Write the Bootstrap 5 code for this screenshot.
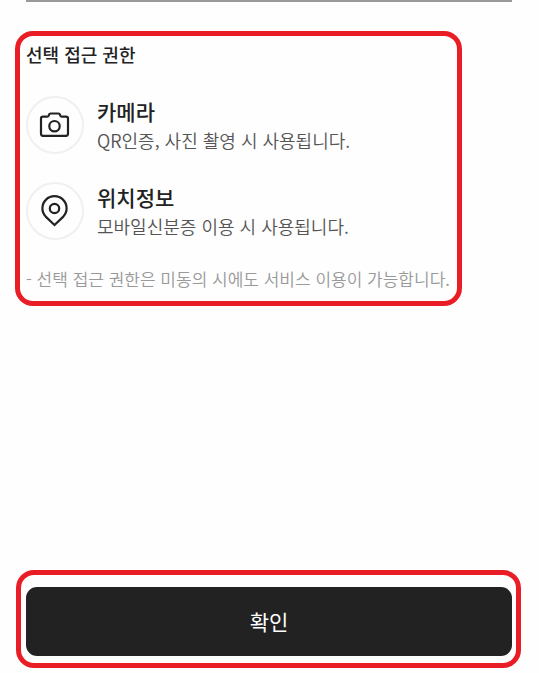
<!DOCTYPE html>
<html lang="ko">
<head>
<meta charset="utf-8">
<meta name="viewport" content="width=device-width, initial-scale=1">
<title>선택 접근 권한</title>
<link href="https://cdn.jsdelivr.net/npm/bootstrap@5.3.0/dist/css/bootstrap.min.css" rel="stylesheet">
<style>
  body { font-family: "Noto Sans CJK KR", sans-serif; color: #222; background: #fefefe; }
  .page { padding: 0 18px 5px 15px; }
  .divider { height: 2px; margin: 0 9px 29px 11px; background: #999; }
  .marked { border: 5px solid #e91d25; border-radius: 18px; }
  .permissions { max-width: 447px; padding: 5px 6px 10px; }
  .section-title { font-size: 18px; line-height: 26px; font-weight: 500; margin-bottom: 29px; }
  .permission-list { gap: 28px; margin-bottom: 27px; }
  .permission { gap: 13px; }
  .icon-circle { width: 58px; height: 58px; border: 2px solid #f0f0f0; }
  .permission-name { font-size: 21px; line-height: 30px; font-weight: 500; }
  .permission-desc { font-size: 18px; line-height: 28px; font-weight: 350; color: #555; }
  .note { font-size: 17px; line-height: 24px; font-weight: 350; color: #999; }
  .confirm-area { padding: 12px 4px 7px 5px; margin-left: 1px; }
  .btn-confirm { --bs-btn-bg: #222; --bs-btn-color: #fff; --bs-btn-hover-bg: #333; --bs-btn-hover-color: #fff;
    --bs-btn-active-bg: #111; --bs-btn-active-color: #fff; --bs-btn-border-width: 0;
    height: 69px; border-radius: 11px; font-size: 21px; }
</style>
<script src="https://cdn.jsdelivr.net/npm/bootstrap@5.3.0/dist/js/bootstrap.bundle.min.js" defer></script>
</head>
<body>
<div class="page d-flex flex-column min-vh-100">
  <div class="divider"></div>
  <main class="permissions marked">
    <h1 class="section-title">선택 접근 권한</h1>
    <ul class="permission-list list-unstyled d-flex flex-column">
      <li class="permission d-flex align-items-center">
        <span class="icon-circle rounded-circle flex-shrink-0 d-flex align-items-center justify-content-center">
          <svg width="32" height="32" viewBox="0 0 32 32" fill="none" stroke="#222" stroke-width="2.200" stroke-linejoin="round" aria-hidden="true">
            <path d="M4 7.600H8.300Q9.300 7.600 9.700 6.600L10.100 5.500Q10.500 4.500 11.500 4.500H19.500Q20.500 4.500 20.900 5.500L21.300 6.600Q21.700 7.600 22.700 7.600H27Q29 7.600 29 9.600V24.800Q29 26.800 27 26.800H4Q2 26.800 2 24.800V9.600Q2 7.600 4 7.600Z"/>
            <circle cx="15.500" cy="17.200" r="5.200"/>
          </svg>
        </span>
        <div>
          <h2 class="permission-name mb-0">카메라</h2>
          <p class="permission-desc mb-0">QR인증, 사진 촬영 시 사용됩니다.</p>
        </div>
      </li>
      <li class="permission d-flex align-items-center">
        <span class="icon-circle rounded-circle flex-shrink-0 d-flex align-items-center justify-content-center">
          <svg width="32" height="32" viewBox="0 0 32 32" fill="none" stroke="#222" stroke-width="2.200" aria-hidden="true">
            <path d="M15.500 30L6.700 21.600A12.100 12.100 0 1 1 24.300 21.600Z"/>
            <circle cx="15.500" cy="13.500" r="4.700"/>
          </svg>
        </span>
        <div>
          <h2 class="permission-name mb-0">위치정보</h2>
          <p class="permission-desc mb-0">모바일신분증 이용 시 사용됩니다.</p>
        </div>
      </li>
    </ul>
    <p class="note mb-0">- 선택 접근 권한은 미동의 시에도 서비스 이용이 가능합니다.</p>
  </main>
  <div class="confirm-area marked mt-auto">
    <button type="button" class="btn btn-confirm w-100">확인</button>
  </div>
</div>
</body>
</html>
